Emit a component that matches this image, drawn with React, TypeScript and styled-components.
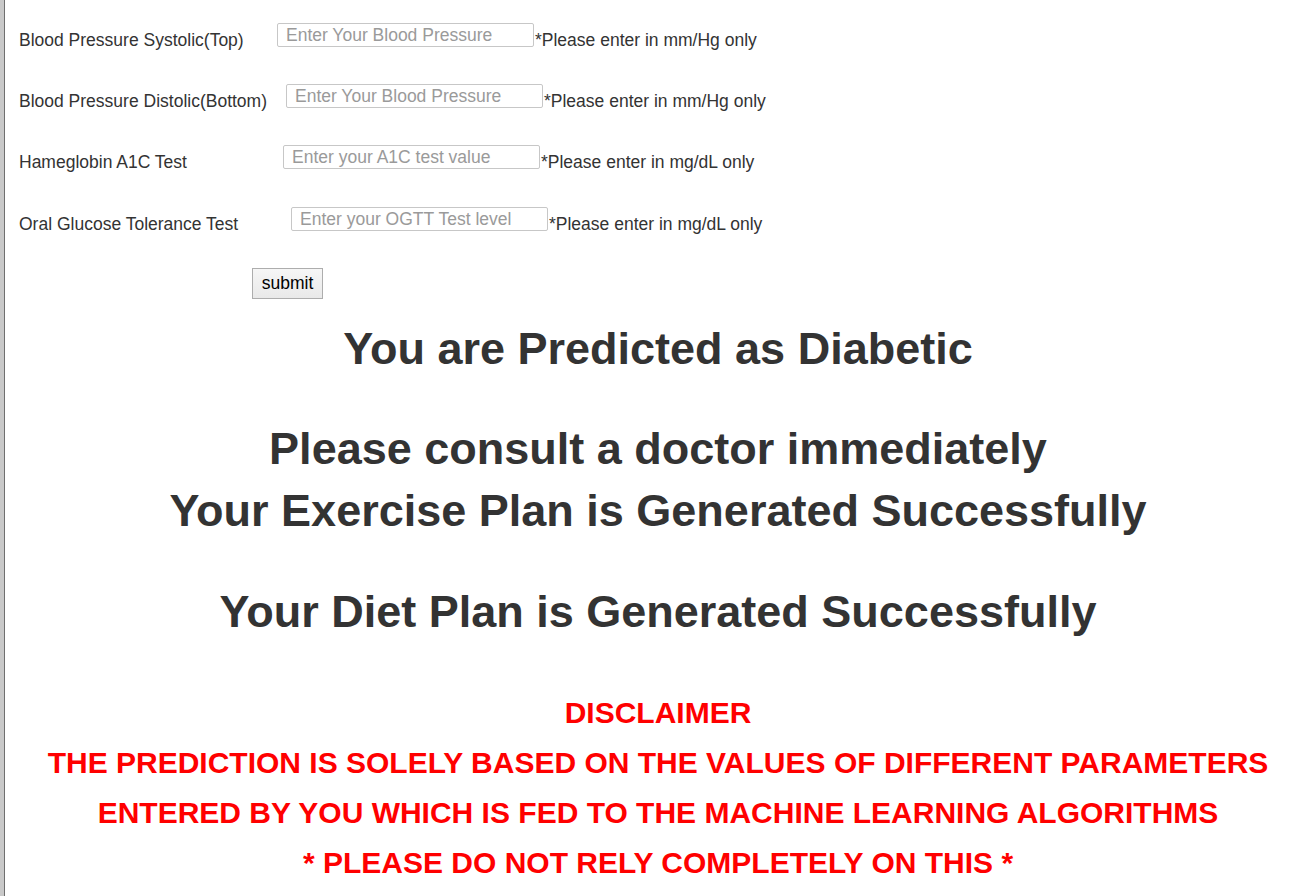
import React from "react";
import styled, { createGlobalStyle } from "styled-components";

const GlobalStyle = createGlobalStyle`
  html, body {
    margin: 0;
    padding: 0;
    background: #ffffff;
  }
  body {
    font-family: "Liberation Sans", Arial, sans-serif;
    color: #333333;
  }
`;

const Frame = styled.div`
  display: flex;
  min-height: 896px;
  width: 1311px;
`;

const EdgeBar = styled.div`
  flex: 0 0 4px;
  background: #c9c9c9;
  border-right: 1px solid #6f6f6f;
`;

const Content = styled.div`
  flex: 1;
  display: flex;
  flex-direction: column;
`;

const Form = styled.form`
  display: flex;
  flex-direction: column;
  padding: 23px 0 0 14px;
`;

const Row = styled.div<{ $gap?: number }>`
  display: flex;
  align-items: flex-start;
  height: 24px;
  margin-bottom: ${(p) => p.$gap ?? 37}px;
`;

const Label = styled.label<{ $w: number }>`
  width: ${(p) => p.$w}px;
  flex: 0 0 auto;
  margin-top: 7px;
  font-size: 17.5px;
  line-height: 20px;
  color: #333333;
  white-space: nowrap;
`;

const Field = styled.input`
  box-sizing: border-box;
  width: 257px;
  height: 24px;
  padding: 0 8px 0;
  border: 1px solid #c7c7c7;
  border-radius: 2px;
  font-family: "Liberation Sans", Arial, sans-serif;
  font-size: 17.5px;
  color: #333;
  background: #fff;
  outline: none;
  &::placeholder {
    color: #9a9a9a;
  }
`;

const Hint = styled.span`
  margin: 7px 0 0 1px;
  font-size: 17.5px;
  line-height: 20px;
  color: #333333;
  white-space: nowrap;
`;

const SubmitButton = styled.button`
  align-self: flex-start;
  margin: 0 0 0 233px;
  box-sizing: border-box;
  width: 71px;
  height: 31px;
  padding: 0;
  font-family: "Liberation Sans", Arial, sans-serif;
  font-size: 17.5px;
  color: #000;
  background: linear-gradient(#f6f6f6, #e9e9e9);
  border: 1px solid #adadad;
  border-radius: 0;
`;

const Heading = styled.h1<{ $top: number }>`
  margin: ${(p) => p.$top}px 0 0;
  font-size: 45px;
  line-height: 52px;
  font-weight: 700;
  color: #333333;
  text-align: center;
  white-space: nowrap;
`;

const Disclaimer = styled.div`
  margin-top: 50px;
  display: flex;
  flex-direction: column;
  align-items: center;
`;

const WarnLine = styled.p`
  margin: 0;
  font-size: 30px;
  line-height: 50px;
  font-weight: 700;
  color: #ff0000;
  text-align: center;
  white-space: nowrap;
`;

const rows = [
  { label: "Blood Pressure Systolic(Top)", w: 258, ph: "Enter Your Blood Pressure", hint: "*Please enter in mm/Hg only" },
  { label: "Blood Pressure Distolic(Bottom)", w: 267, ph: "Enter Your Blood Pressure", hint: "*Please enter in mm/Hg only" },
  { label: "Hameglobin A1C Test", w: 264, ph: "Enter your A1C test value", hint: "*Please enter in mg/dL only" },
  { label: "Oral Glucose Tolerance Test", w: 272, ph: "Enter your OGTT Test level", hint: "*Please enter in mg/dL only" },
];

export default function App() {
  return (
    <>
      <GlobalStyle />
      <Frame>
        <EdgeBar />
        <Content>
          <Form onSubmit={(e) => e.preventDefault()}>
            {rows.map((r, i) => (
              <Row key={i} $gap={i === 2 ? 38 : 37}>
                <Label $w={r.w}>{r.label}</Label>
                <Field type="text" placeholder={r.ph} />
                <Hint>{r.hint}</Hint>
              </Row>
            ))}
            <SubmitButton type="submit">submit</SubmitButton>
          </Form>
          <Heading $top={24}>You are Predicted as Diabetic</Heading>
          <Heading $top={48}>Please consult a doctor immediately</Heading>
          <Heading $top={10}>Your Exercise Plan is Generated Successfully</Heading>
          <Heading $top={49}>Your Diet Plan is Generated Successfully</Heading>
          <Disclaimer>
            <WarnLine>DISCLAIMER</WarnLine>
            <WarnLine>THE PREDICTION IS SOLELY BASED ON THE VALUES OF DIFFERENT PARAMETERS</WarnLine>
            <WarnLine>ENTERED BY YOU WHICH IS FED TO THE MACHINE LEARNING ALGORITHMS</WarnLine>
            <WarnLine>* PLEASE DO NOT RELY COMPLETELY ON THIS *</WarnLine>
          </Disclaimer>
        </Content>
      </Frame>
    </>
  );
}
